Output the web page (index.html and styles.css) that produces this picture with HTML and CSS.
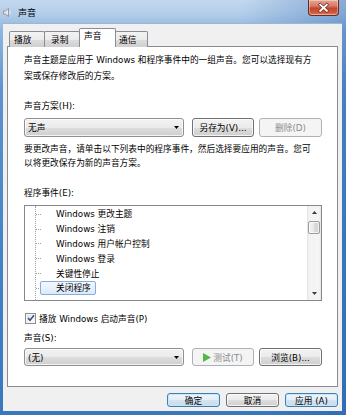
FILE: index.html
```html
<!DOCTYPE html>
<html lang="zh-CN">
<head>
<meta charset="utf-8">
<title>声音</title>
<link rel="stylesheet" href="styles.css">
</head>
<body>
<div class="win">
  <div class="titlebar">
    <svg class="appicon" viewBox="0 0 9 9" width="9" height="9">
      <path d="M0.5 3h2l3-2.5v8l-3-2.5h-2z" fill="#e8e8e8" stroke="#8a8a8a" stroke-width="0.8"/>
      <path d="M6.6 2.6q1.4 1.9 0 3.8" fill="none" stroke="#f4f4f4" stroke-width="0.9"/>
    </svg>
    <span class="title">声音</span>
    <div class="close">
      <svg viewBox="0 0 31 16" width="31" height="16">
        <path d="M12 4.5l7 6.5M19 4.5l-7 6.5" stroke="#6b2a20" stroke-width="3.4" stroke-linecap="square"/>
        <path d="M12 4.5l7 6.5M19 4.5l-7 6.5" stroke="#ffffff" stroke-width="2" stroke-linecap="square"/>
      </svg>
    </div>
  </div>
  <div class="frame">
    <div class="client">
      <div class="tabs">
        <div class="tab t1">播放</div>
        <div class="tab t2">录制</div>
        <div class="tab t3 active">声音</div>
        <div class="tab t4">通信</div>
      </div>
      <div class="panel">
        <p class="desc">声音主题是应用于 Windows 和程序事件中的一组声音。您可以选择现有方<br>案或保存修改后的方案。</p>
        <div class="label l1">声音方案(H):</div>
        <div class="row">
          <div class="combo"><span>无声</span><svg class="arrow" viewBox="0 0 5 3" width="5" height="3"><path d="M0 0h5l-2.5 3z" fill="#000"/></svg></div>
          <div class="btn b1">另存为(V)...</div>
          <div class="btn b2 disabled">删除(D)</div>
        </div>
        <p class="desc d2">要更改声音，请单击以下列表中的程序事件，然后选择要应用的声音。您可<br>以将更改保存为新的声音方案。</p>
        <div class="label l2">程序事件(E):</div>
        <div class="listbox">
          <div class="tree">
            <ul class="lines">
              <li><i class="dash"></i><span class="item">Windows 更改主题</span></li>
              <li><i class="dash"></i><span class="item">Windows 注销</span></li>
              <li><i class="dash"></i><span class="item">Windows 用户帐户控制</span></li>
              <li><i class="dash"></i><span class="item">Windows 登录</span></li>
              <li><i class="dash"></i><span class="item">关键性停止</span></li>
              <li><i class="dash"></i><span class="item sel">关闭程序</span></li>
            </ul>
          </div>
          <div class="vscroll">
            <div class="sbtn"><svg viewBox="0 0 5 3" width="5" height="3"><path d="M0 3h5l-2.5-3z" fill="#3a3a3a"/></svg></div>
            <div class="thumb"></div>
            <div class="track"></div>
            <div class="sbtn"><svg viewBox="0 0 5 3" width="5" height="3"><path d="M0 0h5l-2.5 3z" fill="#3a3a3a"/></svg></div>
          </div>
        </div>
        <div class="check">
          <span class="box"><svg viewBox="0 0 8 8" width="8" height="8"><path d="M1 4l2 2.2L7 1.2" fill="none" stroke="#3b4f7e" stroke-width="1.6"/></svg></span>
          <span>播放 Windows 启动声音(P)</span>
        </div>
        <div class="label l3">声音(S):</div>
        <div class="row r2">
          <div class="combo"><span>(无)</span><svg class="arrow" viewBox="0 0 5 3" width="5" height="3"><path d="M0 0h5l-2.5 3z" fill="#000"/></svg></div>
          <div class="btn b1 disabled"><svg class="play" viewBox="0 0 8 9" width="8" height="9"><path d="M0 0l8 4.5L0 9z" fill="#52b748"/></svg>测试(T)</div>
          <div class="btn b2">浏览(B)...</div>
        </div>
      </div>
      <div class="footer">
        <div class="btn fbtn default">确定</div>
        <div class="btn fbtn">取消</div>
        <div class="btn fbtn focus">应用 (A)</div>
      </div>
    </div>
  </div>
</div>
</body>
</html>
```

FILE: styles.css
```css
* { box-sizing: border-box; }
html, body { margin: 0; padding: 0; }
body {
  width: 346px;
  height: 415px;
  overflow: hidden;
  font-family: "DejaVu Sans", "Noto Sans CJK SC", sans-serif;
  font-size: 8.7px;
  color: #000;
  background: #3f7fc4;
}
.win {
  width: 346px;
  height: 415px;
  display: flex;
  flex-direction: column;
  background:
    linear-gradient(90deg, rgba(40,100,175,0) 0%, rgba(40,100,175,0) 70%, rgba(30,90,170,.35) 100%),
    linear-gradient(180deg, #c3d8ee 0px, #b2cde9 14px, #8fb6df 30px, #5c93cf 90px, #4583c7 250px, #3a78be 415px);
}
.titlebar {
  height: 23px;
  display: flex;
  align-items: flex-start;
  padding-left: 3px;
  flex: none;
}
.appicon { margin-top: 8px; flex: none; }
.title { margin-left: 6px; margin-top: 7px; line-height: 12px; font-size: 9px; }
.close {
  margin-left: auto;
  margin-right: 7px;
  width: 31px;
  height: 16px;
  border: 1px solid #6d2a1f;
  border-top: none;
  border-radius: 0 0 4px 4px;
  background: linear-gradient(180deg, #e9a597 0%, #d67a66 40%, #c4452c 55%, #cf5a3f 85%, #e0876c 100%);
  box-shadow: inset 0 0 0 1px rgba(255,255,255,.35);
  display: flex;
}
.close svg { display: block; }
.frame {
  flex: 1;
  display: flex;
  padding: 0 5px 4px 3px;
}
.client {
  flex: 1;
  background: #f0f0f0;
  display: flex;
  flex-direction: column;
  border: 1px solid #9fb6cf;
  border-width: 1px 0 0 0;
}
.tabs {
  height: 22px;
  display: flex;
  align-items: flex-end;
  padding-left: 6px;
  flex: none;
}
.tab {
  height: 16px;
  border: 1px solid #898c95;
  border-bottom: none;
  border-radius: 2px 2px 0 0;
  background: linear-gradient(180deg, #f3f3f3 0%, #ebebeb 50%, #dddddd 51%, #cfcfcf 100%);
  padding: 2px 0 0 4px;
  line-height: 12px;
  margin-bottom: -1px;
  position: relative;
}
.t1 { width: 36px; }
.t2 { width: 36px; margin-left: -1px; padding-left: 6px; }
.t3 { width: 37px; margin-left: -1px; }
.t4 { width: 33px; margin-left: -1px; padding-left: 3px; }
.tab.active {
  height: 19px;
  background: #fff;
  z-index: 1;
  padding-top: 1px;
}
.panel {
  flex: none;
  height: 341px;
  margin: 0 4px 0 4px;
  background: #fff;
  border: 1px solid #898c95;
  padding: 6px 15px 0 16px;
  display: flex;
  flex-direction: column;
}
.desc {
  margin: 0;
  line-height: 15.5px;
}
.d2 { margin-top: 6px; line-height: 13.5px; }
.label { line-height: 14px; }
.l1 { margin-top: 15px; }
.l2 { margin-top: 16px; }
.l3 { margin-top: 6px; }
.row {
  display: flex;
  margin-top: 5px;
  height: 19px;
}
.r2 { margin-top: 3px; height: 18px; }
.combo {
  width: 160px;
  border: 1px solid #8e8f8f;
  border-radius: 3px;
  background: linear-gradient(180deg, #f2f2f2 0%, #ebebeb 50%, #dddddd 51%, #cfcfcf 100%);
  box-shadow: inset 0 0 0 1px rgba(255,255,255,.75);
  display: flex;
  align-items: center;
  padding: 0 3px 0 3px;
}
.combo span { flex: 1; }
.arrow { flex: none; margin-right: 1px; }
.btn {
  border: 1px solid #707070;
  border-radius: 3px;
  background: linear-gradient(180deg, #f2f2f2 0%, #ebebeb 50%, #dddddd 51%, #cfcfcf 100%);
  box-shadow: inset 0 0 0 1px rgba(255,255,255,.75);
  display: flex;
  align-items: center;
  justify-content: center;
}
.b1 { width: 62px; margin-left: 8px; }
.b2 { width: 63px; margin-left: 5px; }
.btn.disabled {
  border-color: #adb2b5;
  background: #f4f4f4;
  box-shadow: none;
  color: #8a8a8a;
}
.play { margin-right: 2px; }
.listbox {
  margin-top: 5px;
  height: 96px;
  border: 1px solid #828790;
  display: flex;
  flex: none;
}
.tree {
  flex: 1;
  padding-left: 10px;
  display: flex;
}
.lines {
  list-style: none;
  margin: 0;
  padding: 1px 0 0 0;
  flex: 1;
  border-left: 1px dotted #a0a0a0;
}
.lines li {
  height: 14.8px;
  display: flex;
  align-items: center;
}
.dash {
  width: 5px;
  border-top: 1px dotted #a0a0a0;
  flex: none;
}
.item {
  padding-left: 15px;
  line-height: 12px;
  border: 1px solid transparent;
  border-left: none;
}
.item.sel {
  margin-left: -1px;
  border: 1px solid #84acdd;
  border-radius: 2px;
  padding: 0 4px 0 15px;
  line-height: 12px;
  background: linear-gradient(180deg, #f3f8fe 0%, #dce9fb 100%);
}
.vscroll {
  width: 14px;
  flex: none;
  display: flex;
  flex-direction: column;
  background: linear-gradient(90deg, #e3e3e3 0%, #f3f3f3 15%, #f5f5f5 85%, #e6e6e6 100%);
}
.sbtn {
  height: 13px;
  display: flex;
  align-items: center;
  justify-content: center;
  flex: none;
}
.thumb {
  height: 13px;
  margin: 2px 1px 0 1px;
  border: 1px solid #9a9a9a;
  border-radius: 2px;
  background: linear-gradient(90deg, #f4f4f4 0%, #e8e8e8 50%, #dadada 51%, #d2d2d2 100%);
  box-shadow: inset 0 0 0 1px rgba(255,255,255,.7);
  flex: none;
}
.track { flex: 1; }
.check {
  margin-top: 10px;
  display: flex;
  align-items: center;
  height: 14px;
}
.box {
  width: 11px;
  height: 11px;
  border: 1px solid #8e8f8f;
  background: linear-gradient(135deg, #dcdcdc 0%, #f7f7f7 60%, #ffffff 100%);
  box-shadow: inset 0 0 0 1px #f4f4f4;
  display: flex;
  align-items: center;
  justify-content: center;
  margin-left: 1px;
  margin-right: 3px;
  flex: none;
}
.footer {
  display: flex;
  justify-content: flex-end;
  gap: 6px;
  padding: 6px 4px 0 0;
}
.fbtn {
  width: 53px;
  height: 14px;
}
.btn.default, .btn.focus {
  border-color: #3c7fb1;
  background: linear-gradient(180deg, #eef5fb 0%, #e3eef8 50%, #d4e3f0 51%, #c9dbea 100%);
  box-shadow: inset 0 0 0 1px rgba(200,230,250,.9);
}
```
